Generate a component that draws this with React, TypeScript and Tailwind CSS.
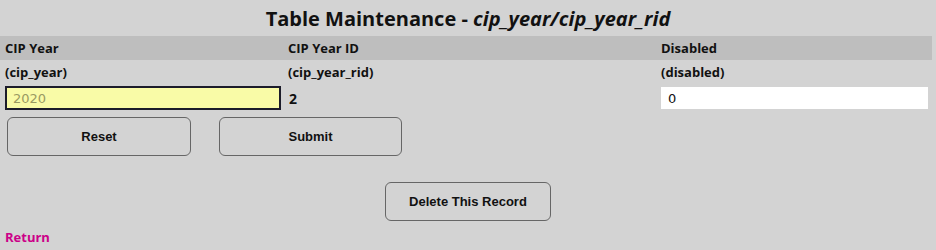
import React from "react"

const labelFont = { fontFamily: "'Open Sans', Lato, sans-serif" }

export default function App() {
  return (
    <div className="min-h-[250px] w-[936px] bg-[#d3d3d3] text-[#111]" style={labelFont}>
      <h1 className="pt-[6px] text-center text-[20px] font-bold leading-[26px]">
        Table Maintenance - <i>cip_year/cip_year_rid</i>
      </h1>

      <div className="mt-[4px] mr-[4px] grid grid-cols-[283px_373px_1fr] bg-[#bebebe] px-[5px] py-[4px] text-[13px] font-bold leading-[16px]">
        <span>CIP Year</span>
        <span>CIP Year ID</span>
        <span>Disabled</span>
      </div>

      <div className="mr-[4px] grid grid-cols-[283px_373px_1fr] px-[5px] pt-[4px] text-[13px] font-bold leading-[16px]">
        <span>(cip_year)</span>
        <span>(cip_year_rid)</span>
        <span>(disabled)</span>
      </div>

      <div className="mr-[4px] grid grid-cols-[283px_373px_1fr] items-center px-[5px] pt-[6px]">
        <input
          defaultValue="2020"
          className="h-[24px] w-[276px] border-2 border-[#1c1c2a] bg-[#f9fba7] px-[6px] text-[13px] text-[#9a9a62] outline-none"
          style={{ fontFamily: "'DejaVu Sans', sans-serif" }}
        />
        <span className="pl-[1px] text-[14px] font-bold">2</span>
        <input
          defaultValue="0"
          className="h-[22px] w-[267px] bg-white px-[7px] text-[13px] text-[#111] outline-none"
          style={{ fontFamily: "'DejaVu Sans', sans-serif" }}
        />
      </div>

      <div
        className="flex gap-[28px] pl-[7px] pt-[7px]"
        style={{ fontFamily: "'Liberation Sans', Arial, sans-serif" }}
      >
        <button className="h-[39px] w-[184px] rounded-[6px] border border-[#666] text-[13px] font-bold">
          Reset
        </button>
        <button className="h-[39px] w-[183px] rounded-[6px] border border-[#666] text-[13px] font-bold">
          Submit
        </button>
      </div>

      <div
        className="flex justify-center pt-[26px]"
        style={{ fontFamily: "'Liberation Sans', Arial, sans-serif" }}
      >
        <button className="h-[39px] w-[166px] rounded-[6px] border border-[#666] text-[13px] font-bold">
          Delete This Record
        </button>
      </div>

      <a href="#" className="block px-[5px] pt-[8px] text-[13px] font-bold leading-[16px] text-[#cc0088]">
        Return
      </a>
    </div>
  )
}
